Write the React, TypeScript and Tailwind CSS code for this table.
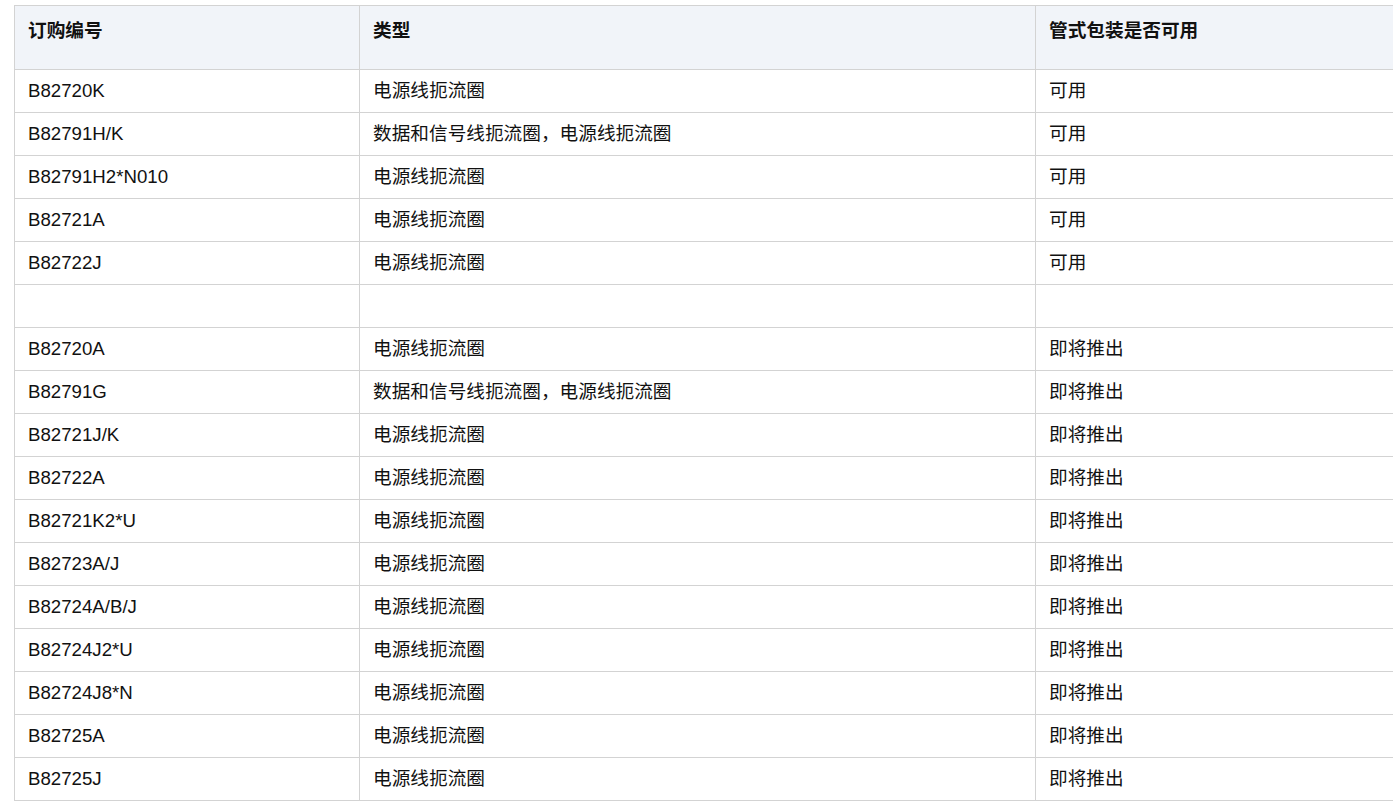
const ROWS: [string, string, string][] = [
  ['B82720K', '电源线扼流圈', '可用'],
  ['B82791H/K', '数据和信号线扼流圈，电源线扼流圈', '可用'],
  ['B82791H2*N010', '电源线扼流圈', '可用'],
  ['B82721A', '电源线扼流圈', '可用'],
  ['B82722J', '电源线扼流圈', '可用'],
  ['', '', ''],
  ['B82720A', '电源线扼流圈', '即将推出'],
  ['B82791G', '数据和信号线扼流圈，电源线扼流圈', '即将推出'],
  ['B82721J/K', '电源线扼流圈', '即将推出'],
  ['B82722A', '电源线扼流圈', '即将推出'],
  ['B82721K2*U', '电源线扼流圈', '即将推出'],
  ['B82723A/J', '电源线扼流圈', '即将推出'],
  ['B82724A/B/J', '电源线扼流圈', '即将推出'],
  ['B82724J2*U', '电源线扼流圈', '即将推出'],
  ['B82724J8*N', '电源线扼流圈', '即将推出'],
  ['B82725A', '电源线扼流圈', '即将推出'],
  ['B82725J', '电源线扼流圈', '即将推出'],
]

const cell = 'border border-[#d3d3d3] px-[13px] py-[9px] h-[43px] text-left align-middle'
const head = 'border border-[#d3d3d3] px-[13px] pt-[13px] pb-[26px] h-[64px] text-left align-top font-bold'

export default function App() {
  return (
    <div
      className="w-full h-[806px] overflow-hidden bg-white text-[#111] text-[18.67px] leading-[24px]"
      style={{ fontFamily: '"Liberation Sans", Arial, "Noto Sans CJK SC", sans-serif' }}
    >
      <div className="pt-[5px] pl-[14px]">
        <table className="table-fixed border-collapse w-[1420px]">
          <colgroup>
            <col className="w-[345px]" />
            <col className="w-[676px]" />
            <col />
          </colgroup>
          <thead>
            <tr className="bg-[#f1f4f9]">
              <th className={head}>订购编号</th>
              <th className={head}>类型</th>
              <th className={head}>管式包装是否可用</th>
            </tr>
          </thead>
          <tbody>
            {ROWS.map((r, i) => (
              <tr key={i}>
                <td className={cell}>{r[0]}</td>
                <td className={cell}>{r[1]}</td>
                <td className={cell}>{r[2]}</td>
              </tr>
            ))}
          </tbody>
        </table>
      </div>
    </div>
  )
}
